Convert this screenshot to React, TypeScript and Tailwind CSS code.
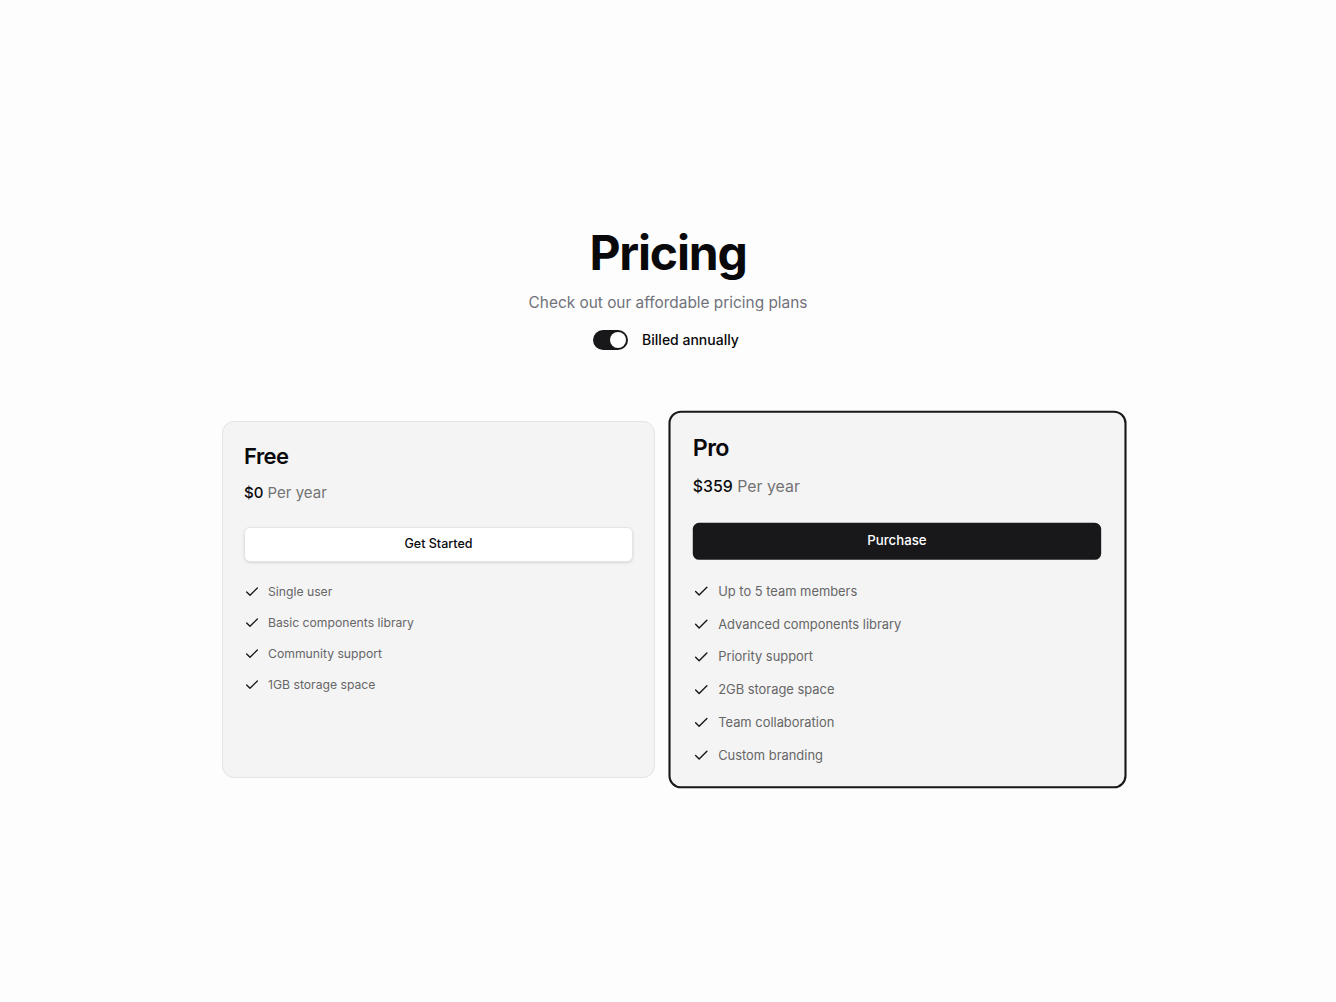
import { Check } from 'lucide-react';

type Plan = {
  name: string;
  price: string;
  action: string;
  features: string[];
  featured?: boolean;
};

const plans: Plan[] = [
  {
    name: 'Free',
    price: '$0',
    action: 'Get Started',
    features: ['Single user', 'Basic components library', 'Community support', '1GB storage space'],
  },
  {
    name: 'Pro',
    price: '$359',
    action: 'Purchase',
    featured: true,
    features: [
      'Up to 5 team members',
      'Advanced components library',
      'Priority support',
      '2GB storage space',
      'Team collaboration',
      'Custom branding',
    ],
  },
];

function PlanCard({ plan }: { plan: Plan }) {
  return (
    <div
      className={`flex flex-col rounded-xl bg-[#f4f4f5] ${
        plan.featured
          ? 'scale-[1.058] border-2 border-[#18181b] pl-[21px] pr-[22px] pt-[22px] pb-[19px]'
          : 'border border-[#e4e4e7] px-[21px] pt-[23px] pb-5'
      }`}
    >
      <h2 className="text-[22px] font-semibold leading-none tracking-tight text-[#09090b]">{plan.name}</h2>
      <div className="mt-[14px] text-[15px] leading-6">
        <span className="font-medium text-[#09090b]">{plan.price}</span>{' '}
        <span className="text-[#737373]">Per year</span>
      </div>
      {plan.featured ? (
        <button
          type="button"
          className="mt-[22px] h-[35px] w-full rounded-md bg-[#18181b] text-[12.5px] font-medium text-white"
        >
          {plan.action}
        </button>
      ) : (
        <button
          type="button"
          className="mt-[22px] h-[35px] w-full rounded-md border border-[#e4e4e7] bg-white text-[12.5px] font-medium text-[#09090b] shadow-sm"
        >
          {plan.action}
        </button>
      )}
      <ul className="mt-5 flex flex-col gap-[11px]">
        {plan.features.map((f) => (
          <li key={f} className="flex h-5 items-center gap-2 text-[12.2px] text-[#666666]">
            <Check className="h-4 w-4 shrink-0 text-[#18181b]" strokeWidth={2} />
            <span>{f}</span>
          </li>
        ))}
      </ul>
    </div>
  );
}

export default function App() {
  return (
    <div
      className="min-h-screen w-full bg-[#fdfdfd] text-[#09090b]"
      style={{ fontFamily: 'Inter, "Noto Sans", sans-serif' }}
    >
      <div className="flex flex-col items-center pt-[229px]">
        <h1 className="text-5xl font-bold leading-none tracking-tight">Pricing</h1>
        <p className="mt-[14px] text-[15.4px] leading-6 text-[#71717a]">Check out our affordable pricing plans</p>
        <div className="mt-[15px] flex h-5 items-center gap-3.5 pr-1">
          <button
            type="button"
            role="switch"
            aria-checked="true"
            className="flex h-5 w-[35px] items-center rounded-full border-2 border-transparent bg-[#18181b]"
          >
            <span className="block h-4 w-4 translate-x-[15px] rounded-full bg-white" />
          </button>
          <span className="text-sm font-medium">Billed annually</span>
        </div>
        <div className="mt-[71px] grid w-[892px] grid-cols-2 gap-[26px]">
          {plans.map((p) => (
            <PlanCard key={p.name} plan={p} />
          ))}
        </div>
      </div>
    </div>
  );
}
